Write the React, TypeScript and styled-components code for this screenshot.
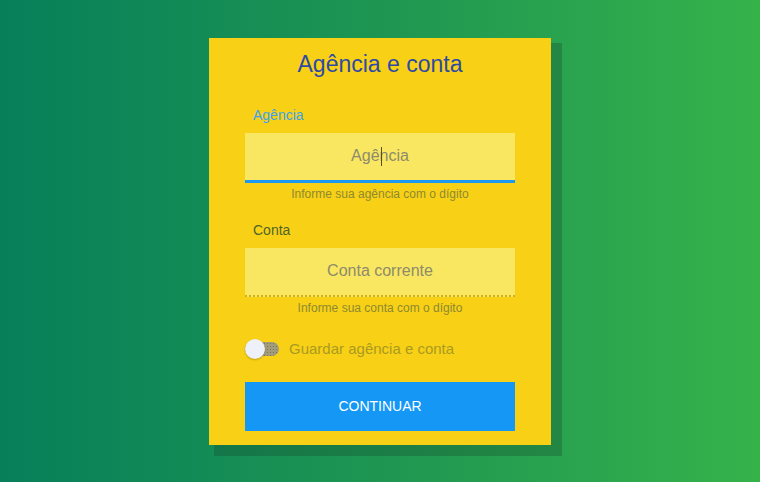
import React from "react";
import styled, { createGlobalStyle } from "styled-components";

const GlobalStyle = createGlobalStyle`
  html, body {
    margin: 0;
    padding: 0;
  }
  body {
    font-family: "Liberation Sans", Arial, sans-serif;
  }
`;

const Page = styled.div`
  min-height: 100vh;
  display: flex;
  align-items: center;
  justify-content: center;
  background: linear-gradient(90deg, #077f5a 0%, #1e9652 50%, #36b24b 100%);
`;

const Card = styled.form`
  width: 342px;
  box-sizing: border-box;
  padding: 12px 36px 14px 36px;
  background: #f8d117;
  box-shadow: 8px 8px 0 3px rgba(20, 60, 40, 0.28);
  display: flex;
  flex-direction: column;
`;

const Title = styled.h1`
  margin: 0;
  font-size: 23px;
  line-height: 28px;
  font-weight: 400;
  color: #2f4aa3;
  text-align: center;
`;

const Field = styled.div<{ $top: number }>`
  display: flex;
  flex-direction: column;
  margin-top: ${(p) => p.$top}px;
`;

const Label = styled.label<{ $focused?: boolean }>`
  padding-left: 8px;
  font-size: 14px;
  line-height: 16px;
  color: ${(p) => (p.$focused ? "#3da2ea" : "#4f6427")};
  margin-bottom: 10px;
`;

const InputWrap = styled.div`
  position: relative;
`;

const Input = styled.input<{ $focused?: boolean }>`
  display: block;
  width: 100%;
  box-sizing: border-box;
  height: ${(p) => (p.$focused ? 50 : 49)}px;
  border: none;
  border-bottom: ${(p) => (p.$focused ? "3px solid #1a98f2" : "2px dotted #cfb11c")};
  background: #f9e762;
  font-family: inherit;
  font-size: 16px;
  color: #5a5620;
  text-align: center;
  outline: none;
  padding: 0;

  &::placeholder {
    color: #8d8b6a;
  }
`;

const Caret = styled.span`
  position: absolute;
  left: 136px;
  top: 14px;
  width: 1px;
  height: 19px;
  background: #5a4e12;
`;

const Helper = styled.div`
  margin-top: 4px;
  font-size: 12px;
  line-height: 14px;
  color: #8d8930;
  text-align: center;
`;

const ToggleRow = styled.label`
  margin-top: 24px;
  display: flex;
  align-items: center;
  gap: 10px;
  height: 20px;
  cursor: pointer;
`;

const Track = styled.span`
  position: relative;
  width: 34px;
  height: 14px;
  border-radius: 7px;
  background-color: #a29c7a;
  background-image: radial-gradient(rgba(70, 70, 60, 0.45) 0.6px, transparent 0.9px);
  background-size: 3px 3px;
`;

const Thumb = styled.span`
  position: absolute;
  left: 0;
  top: -3px;
  width: 20px;
  height: 20px;
  border-radius: 50%;
  background: #eef1f9;
  box-shadow: 0 1px 2px rgba(90, 70, 0, 0.35);
`;

const ToggleText = styled.span`
  font-size: 15px;
  color: #aa9a20;
`;

const Button = styled.button`
  margin-top: 23px;
  height: 49px;
  border: none;
  border-radius: 0;
  background: #1597f5;
  color: #ffffff;
  font-family: inherit;
  font-size: 14px;
  text-transform: uppercase;
  cursor: pointer;
`;

export default function App(): JSX.Element {
  return (
    <>
      <GlobalStyle />
      <Page>
        <Card onSubmit={(e) => e.preventDefault()}>
          <Title>Agência e conta</Title>

          <Field $top={29}>
            <Label $focused>Agência</Label>
            <InputWrap>
              <Input $focused placeholder="Agência" />
              <Caret />
            </InputWrap>
            <Helper>Informe sua agência com o dígito</Helper>
          </Field>

          <Field $top={21}>
            <Label>Conta</Label>
            <Input placeholder="Conta corrente" />
            <Helper>Informe sua conta com o dígito</Helper>
          </Field>

          <ToggleRow>
            <Track>
              <Thumb />
            </Track>
            <ToggleText>Guardar agência e conta</ToggleText>
          </ToggleRow>

          <Button type="submit">Continuar</Button>
        </Card>
      </Page>
    </>
  );
}
